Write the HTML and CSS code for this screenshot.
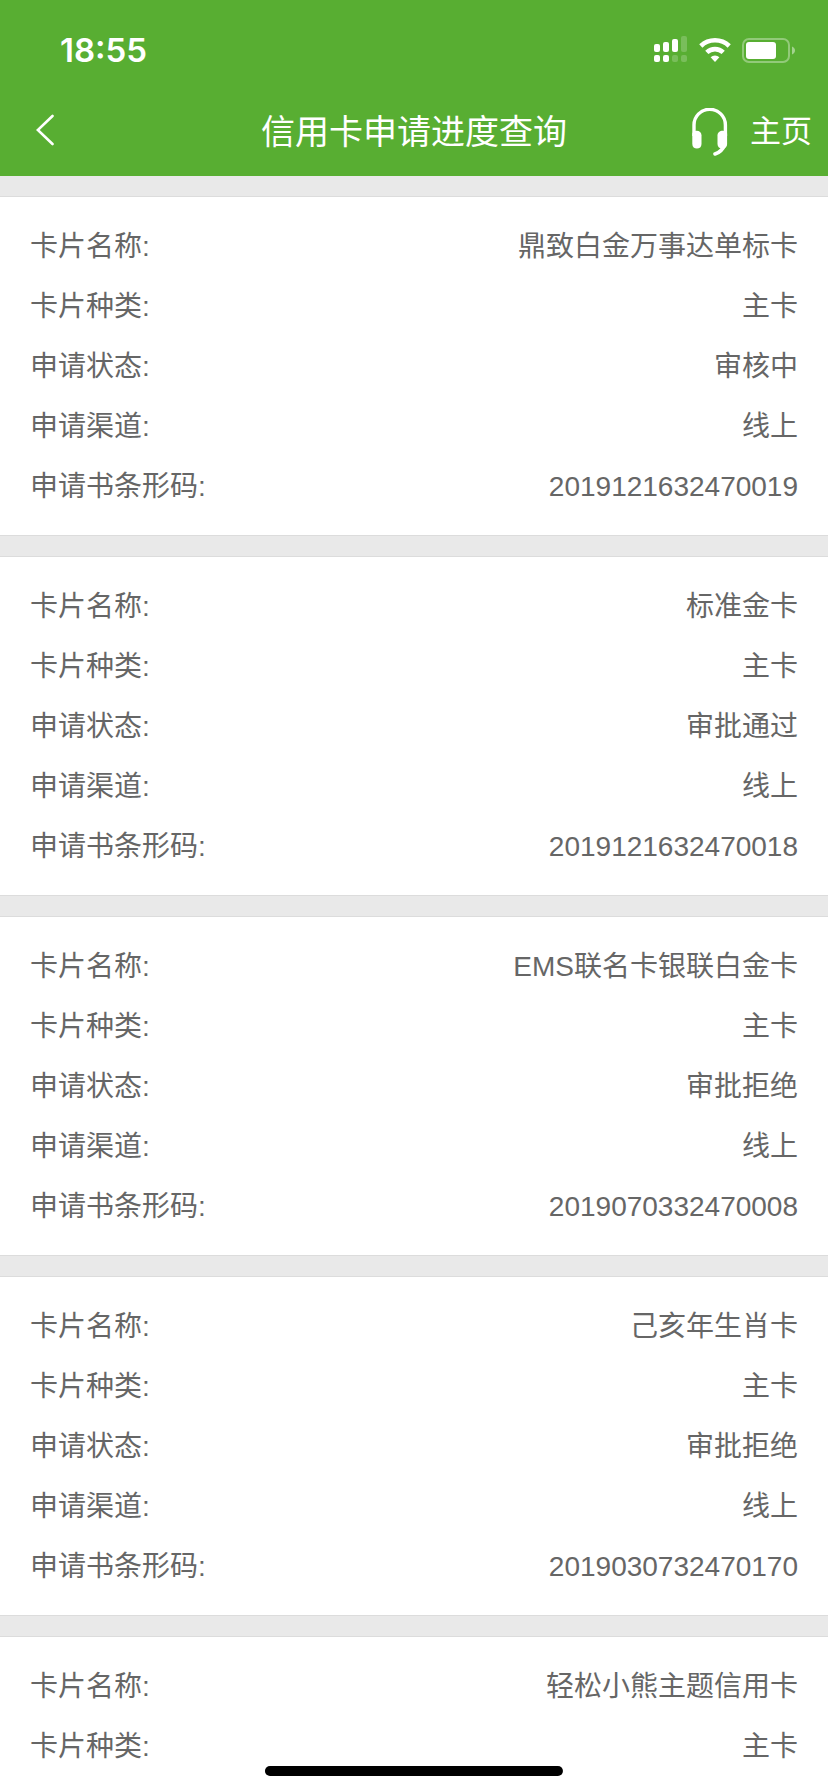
FILE: index.html
```html
<!DOCTYPE html>
<html lang="zh-CN">
<head>
    <meta charset="UTF-8">
    <meta name="viewport" content="width=device-width, initial-scale=1.0">
    <title>信用卡申请进度查询</title>
    <link rel="stylesheet" href="styles.css">
</head>
<body>
    <header class="header">
        <!-- Status bar -->
        <div class="status-bar">
            <span class="time">18:55</span>
            <div class="status-icons">
                <svg width="34" height="28" viewBox="0 0 34 28" fill="#fff">
                    <rect x="0" y="8" width="6" height="8" rx="2"/>
                    <rect x="9" y="6" width="6" height="10" rx="2"/>
                    <rect x="18" y="3" width="6" height="13" rx="2"/>
                    <rect x="27" y="0" width="6" height="16" rx="2" opacity="0.2"/>
                    <rect x="0" y="19" width="6" height="7" rx="2"/>
                    <rect x="9" y="19" width="6" height="7" rx="2"/>
                    <rect x="18" y="19" width="6" height="7" rx="2" opacity="0.2"/>
                    <rect x="27" y="19" width="6" height="7" rx="2" opacity="0.2"/>
                </svg>
                <svg width="32" height="28" viewBox="0 0 32 28" fill="none" stroke="#fff">
                    <path d="M1.8 10a20.5 20.5 0 0 1 28.4 0" stroke-width="4.6"/>
                    <path d="M7.8 16.4a11.9 11.9 0 0 1 16.4 0" stroke-width="4.6"/>
                    <path d="M11.6 21.2a6.5 6.5 0 0 1 8.8 0L16 26z" fill="#fff" stroke="none"/>
                </svg>
                <svg width="54" height="28" viewBox="0 0 54 28">
                    <rect x="1" y="3" width="46" height="23" rx="6" fill="none" stroke="#fff" stroke-width="2" opacity="0.35"/>
                    <rect x="4" y="6" width="30" height="17" rx="3" fill="#fff"/>
                    <path d="M50 10.5c4 1.5 4 6.5 0 8z" fill="#fff" opacity="0.45"/>
                </svg>
            </div>
        </div>

        <!-- Navigation bar -->
        <nav class="nav-bar">
            <button class="back-btn" type="button" aria-label="返回">
                <svg width="18" height="32" viewBox="0 0 18 32" fill="none" stroke="#fff" stroke-width="2.6" stroke-linecap="round">
                    <path d="M16.5 2L1.8 16l14.7 14"/>
                </svg>
            </button>
            <h1 class="title">信用卡申请进度查询</h1>
            <div class="nav-actions">
                <button class="service-btn" type="button" aria-label="客服">
                    <svg width="36" height="48" viewBox="0 0 36 48" fill="none" stroke="#fff">
                        <path d="M2 28V17a15.7 15.7 0 0 1 31.4 0v11" stroke-width="3.4"/>
                        <path d="M.3 25.5C1 23.5 2.5 22.8 4.5 22.8c3 0 5 1.8 5 4.5V36c0 3-2 4.5-4.6 4.5S.3 39 .3 36z" fill="#fff" stroke="none"/>
                        <path d="M35.1 25.5c-.7-2-2.2-2.7-4.2-2.7-3.2 0-5.4 1.8-5.4 4.5V36c0 3 2 4.5 5 4.5 2.6 0 4.6-1.5 4.6-4.5z" fill="#fff" stroke="none"/>
                        <path d="M32.5 37c-1.5 4-5 7.5-9.5 9" stroke-width="3.6" stroke-linecap="round"/>
                    </svg>
                </button>
                <a class="home-link" href="#">主页</a>
            </div>
        </nav>
    </header>

    <main class="card-list">
        <dl class="card">
            <div class="row"><dt>卡片名称:</dt><dd>鼎致白金万事达单标卡</dd></div>
            <div class="row"><dt>卡片种类:</dt><dd>主卡</dd></div>
            <div class="row"><dt>申请状态:</dt><dd>审核中</dd></div>
            <div class="row"><dt>申请渠道:</dt><dd>线上</dd></div>
            <div class="row"><dt>申请书条形码:</dt><dd>2019121632470019</dd></div>
        </dl>
        <dl class="card">
            <div class="row"><dt>卡片名称:</dt><dd>标准金卡</dd></div>
            <div class="row"><dt>卡片种类:</dt><dd>主卡</dd></div>
            <div class="row"><dt>申请状态:</dt><dd>审批通过</dd></div>
            <div class="row"><dt>申请渠道:</dt><dd>线上</dd></div>
            <div class="row"><dt>申请书条形码:</dt><dd>2019121632470018</dd></div>
        </dl>
        <dl class="card">
            <div class="row"><dt>卡片名称:</dt><dd>EMS联名卡银联白金卡</dd></div>
            <div class="row"><dt>卡片种类:</dt><dd>主卡</dd></div>
            <div class="row"><dt>申请状态:</dt><dd>审批拒绝</dd></div>
            <div class="row"><dt>申请渠道:</dt><dd>线上</dd></div>
            <div class="row"><dt>申请书条形码:</dt><dd>2019070332470008</dd></div>
        </dl>
        <dl class="card">
            <div class="row"><dt>卡片名称:</dt><dd>己亥年生肖卡</dd></div>
            <div class="row"><dt>卡片种类:</dt><dd>主卡</dd></div>
            <div class="row"><dt>申请状态:</dt><dd>审批拒绝</dd></div>
            <div class="row"><dt>申请渠道:</dt><dd>线上</dd></div>
            <div class="row"><dt>申请书条形码:</dt><dd>2019030732470170</dd></div>
        </dl>
        <dl class="card card-last">
            <div class="row"><dt>卡片名称:</dt><dd>轻松小熊主题信用卡</dd></div>
            <div class="row"><dt>卡片种类:</dt><dd>主卡</dd></div>
        </dl>
    </main>

    <div class="home-indicator"></div>
</body>
</html>
```

FILE: styles.css
```css
* {
    box-sizing: border-box;
}
body {
    display: flex;
    flex-direction: column;
    min-height: 100vh;
    margin: 0;
    font-family: "Liberation Sans", "Noto Sans CJK SC", sans-serif;
    font-size: 28px;
    color: #666;
    background: #e9e9e9;
}
.header {
    color: #fff;
    background: #58ae32;
}
.status-bar {
    display: flex;
    align-items: center;
    justify-content: space-between;
    height: 88px;
    padding: 12px 32px 0 60px;
}
.time {
    font-family: Inter, sans-serif;
    font-size: 33px;
    font-weight: 600;
}
.status-icons {
    display: flex;
    gap: 11px;
}
.nav-bar {
    display: grid;
    grid-template-columns: 1fr auto 1fr;
    align-items: center;
    height: 88px;
    padding: 0 16px;
}
.nav-bar button {
    display: flex;
    border: none;
    background: none;
    cursor: pointer;
}
.back-btn {
    justify-self: start;
    padding: 0 20px 4px;
}
.service-btn {
    padding: 0;
}
.title {
    margin: 0;
    font-size: 34px;
    font-weight: 400;
    line-height: 50px;
}
.nav-actions {
    display: flex;
    align-items: center;
    justify-content: flex-end;
    gap: 22px;
}
.home-link {
    font-size: 31px;
    line-height: 50px;
    color: #fff;
    text-decoration: none;
}
.card-list {
    display: flex;
    flex: 1;
    flex-direction: column;
    gap: 20px;
    padding-top: 20px;
}
.card {
    margin: 0;
    padding: 20px 30px 18px;
    border-top: 1px solid #dcdcdc;
    border-bottom: 1px solid #dcdcdc;
    background: #fff;
}
.card-last {
    flex: 1;
    padding-bottom: 0;
    border-bottom: none;
}
.row {
    display: flex;
    align-items: baseline;
    justify-content: space-between;
    line-height: 60px;
}
.row dd {
    margin: 0;
    text-align: right;
}
.home-indicator {
    position: fixed;
    bottom: 16px;
    left: 50%;
    width: 36%;
    height: 10px;
    border-radius: 5px;
    background: #000;
    transform: translateX(-50%);
}
```
